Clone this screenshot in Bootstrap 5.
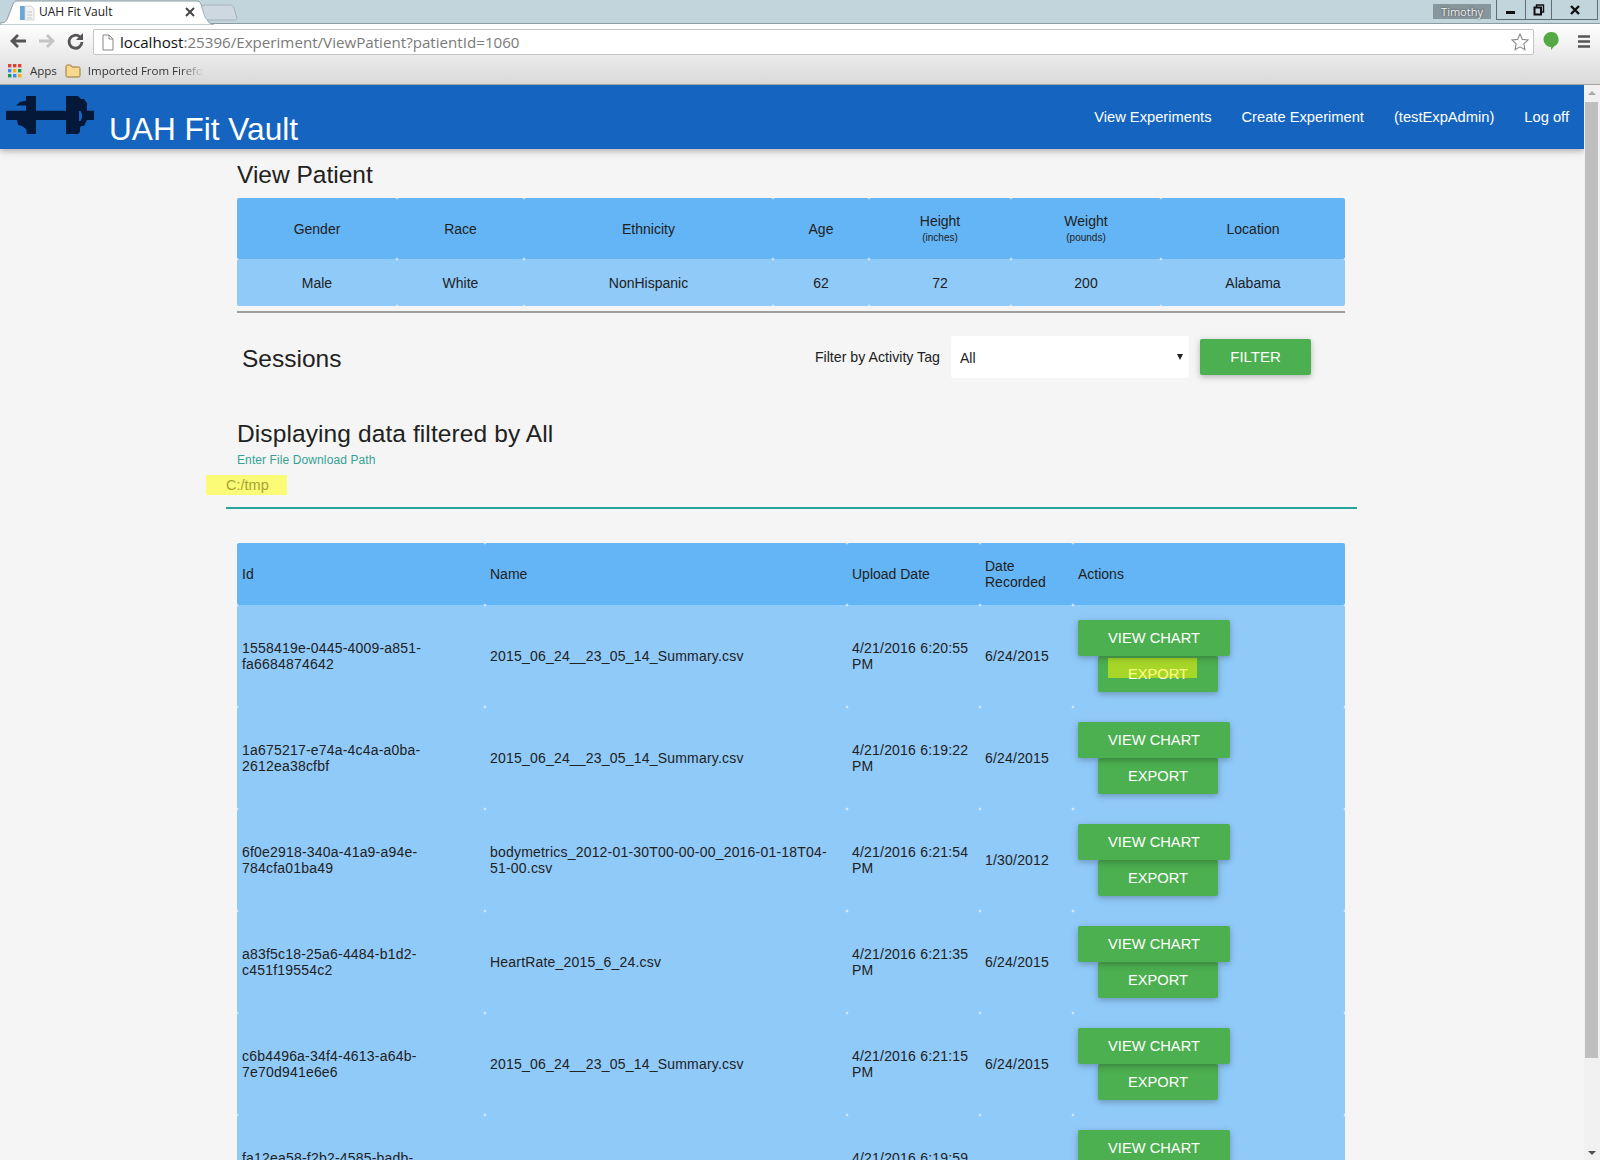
<!DOCTYPE html>
<html lang="en">
<head>
  <meta charset="UTF-8" />
  <title>UAH Fit Vault</title>
  <link href="https://cdn.jsdelivr.net/npm/bootstrap@5.3.0/dist/css/bootstrap.min.css" rel="stylesheet" />
  <style>
    html, body { height: 100%; overflow: hidden; }
    body { background: #f5f5f5; font-family: "Liberation Sans", Arial, sans-serif; font-size: 14px; color: #212121; }

    /* browser frame */
    .tab-strip { height: 24px; background: #c3d5dc; border-bottom: 1px solid #8c9ba1; position: relative; }
    .tab-shape { position: absolute; left: 0; top: 0; }
    .tab-title { position: absolute; left: 39px; top: 4px; font: 12px/16px "Open Sans", sans-serif; color: #222; }
    .tab-close { position: absolute; left: 184px; top: 6px; }
    .user-chip { width: 58px; height: 15px; margin-top: 4px; background: #87969c; color: #f2f2f2; font: 11px/15px "Open Sans", sans-serif; text-align: center; text-shadow: 0 0 2px #333; }
    .win-btns { height: 20px; margin: 0 2px 0 5px; border: 1px solid #5e6d74; border-top: 0; }
    .win-btn { height: 19px; border-left: 1px solid #5e6d74; }
    .win-btn:first-child { border-left: 0; width: 28px; }
    .win-btn.mid { width: 26px; }
    .win-btn.wide { width: 46px; }
    .browser-bars { background: linear-gradient(#ffffff, #d9d9d9); height: 61px; border-bottom: 1px solid #a3a3a3; }
    .tool-row { height: 34px; padding-top: 5px; }
    .addr-box { width: 1441px; height: 26px; margin-left: 5px; background: #fff; border: 1px solid #c4c4c4; border-radius: 2px; font: 15.15px/24px "Open Sans", sans-serif; color: #7a7a7a; padding-left: 7px; }
    .addr-host { color: #111; }
    .addr-text { margin-left: 5px; }
    .marks-row { height: 25px; font: 11.5px/16px "Open Sans", sans-serif; color: #333; padding-left: 8px; }
    .marks-fade { width: 116px; margin-left: 7px; white-space: nowrap; overflow: hidden; -webkit-mask-image: linear-gradient(to right, #000 80%, transparent); mask-image: linear-gradient(to right, #000 80%, transparent); }

    /* page */
    .page-body { height: 1075px; }
    .page-main { width: 1584px; overflow: hidden; }
    .fit-nav { height: 64px; background: #1565c0; box-shadow: 0 2px 5px rgba(0,0,0,.2), 0 2px 10px rgba(0,0,0,.12); align-items: flex-start; position: relative; }
    .fit-brand { display: flex; padding: 0; margin: 0; color: #fff; font-size: 31.6px; line-height: 36px; }
    .fit-brand:hover { color: #fff; }
    .fit-logo { margin: 3px -1px 0 0; width: 110px; height: 55px; flex: none; }
    .fit-brand-text { margin-top: 26px; }
    .fit-links { padding-top: 22px; }
    .navbar-expand .fit-links .nav-link { color: #fff; font-size: 14.7px; line-height: 20px; padding: 0 15px; }
    .fit-wrap { width: 1108px; margin-left: 237px; }
    .fit-title { font-size: 24.5px; line-height: 30px; margin: 0; font-weight: 400; }
    .fit-head { margin: 11px 0 8px; }
    .fit-table { margin: 0; table-layout: fixed; --bs-table-bg: #90caf9; --bs-table-color: #212121; border: 0; }
    .fit-table thead { --bs-table-bg: #64b5f6; }
    .fit-table > :not(caption) > * > * { border: 0; border-radius: 2px; vertical-align: middle; font-weight: 400; line-height: 16px; padding: 15px 5px; }
    .patient-table { text-align: center; }
    .patient-table thead th { height: 61px; padding: 0 5px; }
    .patient-table tbody td { height: 47px; padding: 0 5px; }
    .unit-note { display: block; font-size: 10px; line-height: 12px; margin-top: 3px; }
    .session-table thead th { height: 62px; padding: 0 5px; }
    .session-table tbody td { height: 102px; letter-spacing: .2px; }
    .rule-grey { height: 2px; background: #9e9e9e; margin-top: 5px; }
    .session-bar { margin-top: 23px; height: 42px; padding: 0 34px 0 5px; }
    .filter-label { margin: 2px 11px 0 0; font-size: 14.2px; }
    .activity-pick { width: 238px; height: 42px; margin-right: 11px; border: 0; border-radius: 2px; font-size: 14px; padding: 2px 9px 0; color: #212121; background-size: 12px 12px; background-position: right 3px center; background-image: url("data:image/svg+xml,%3Csvg xmlns='http://www.w3.org/2000/svg' viewBox='0 0 12 12'%3E%3Cpath d='M3 3h6L6 9z' fill='%23222'/%3E%3C/svg%3E"); }
    .btn-fit { display: block; height: 36px; padding: 0; background: #4caf50; border: 0; border-radius: 2px; color: #fff; font-size: 15px; line-height: 36px; box-shadow: 0 2px 5px rgba(0,0,0,.16), 0 2px 10px rgba(0,0,0,.12); position: relative; }
    .btn-fit:hover { background: #4caf50; color: #fff; }
    .btn-filter { width: 111px; }
    .session-table .btn-fit { font-size: 14.7px; letter-spacing: 0; }
    .btn-view { width: 152px; margin-left: 0; z-index: 1; }
    .btn-export { width: 120px; margin-left: 20px; }
    .hl-over { position: absolute; left: 10px; top: 2px; width: 89px; height: 20px; background: rgba(255,255,0,.5); }
    .filter-note { margin-top: 41px; letter-spacing: .1px; }
    .path-label { color: #35a195; font-size: 12px; line-height: 16px; margin-top: 3px; letter-spacing: .1px; }
    .path-field { width: 81px; height: 20px; margin: 7px 0 0 -31px; padding-left: 20px; background: #fbfb78; color: #a6a432; font-size: 14.5px; line-height: 20px; }
    .rule-teal { height: 2px; background: #26a69a; margin: 12px -12px 34px -11px; }

    /* fake scrollbar */
    .fake-scroll { width: 16px; background: #f1f1f1; position: relative; }
    .fake-thumb { position: absolute; left: 1px; right: 2px; top: 17px; height: 956px; background: #bfbfbf; }
    .fake-up { position: absolute; left: 4px; top: 6px; border: 4px solid transparent; border-top: 0; border-bottom: 4px solid #a8a8a8; }
    .fake-down { position: absolute; left: 4px; bottom: 5px; border: 4px solid transparent; border-bottom: 0; border-top: 4px solid #505050; }
  </style>
</head>
<body>
  <div class="tab-strip d-flex justify-content-end">
    <svg class="tab-shape" width="245" height="25" viewBox="0 0 245 25">
      <path d="M0 23c5 0 7-2 8-6L13 4c1-2 2-3 4-3h179c3 0 4 1 5 3l6 15c1 3 3 5 6 5v1H0z" fill="#fff" stroke="#8c9ba1"/>
      <path d="M206 5h24c2 0 3 1 4 3l3 10c0 1 0 2-2 2h-26c-2 0-3-1-4-3l-3-9c-1-2 1-3 4-3z" fill="#cdd8e1" stroke="#a4b2bb"/>
    </svg>
    <svg class="tab-shape" width="36" height="24" viewBox="0 0 36 24">
      <rect x="20" y="6" width="5" height="14" fill="#6aa6d8"/>
      <path d="M25 6h6l3 3v11h-9z" fill="#f2f2f2" stroke="#c9ced4" stroke-width=".8"/>
      <path d="M27 12h5M27 15h5M27 18h5" stroke="#c4c8cc"/>
    </svg>
    <span class="tab-title">UAH Fit Vault</span>
    <svg class="tab-close" width="12" height="12" viewBox="0 0 12 12"><path d="M2 2l8 8M10 2l-8 8" stroke="#444" stroke-width="2"/></svg>
    <div class="user-chip">Timothy</div>
    <div class="win-btns d-flex">
      <div class="win-btn d-flex align-items-center justify-content-center"><svg width="12" height="10" viewBox="0 0 12 10"><rect x="1" y="6" width="9" height="3" fill="#111"/></svg></div>
      <div class="win-btn mid d-flex align-items-center justify-content-center"><svg width="12" height="12" viewBox="0 0 12 12"><path d="M3.500 3V1h7v7H8.500" fill="none" stroke="#111" stroke-width="1.4"/><rect x="1.500" y="3.500" width="6.500" height="7" fill="none" stroke="#111" stroke-width="2"/></svg></div>
      <div class="win-btn wide d-flex align-items-center justify-content-center"><svg width="12" height="10" viewBox="0 0 12 10"><path d="M2 1l8 8M10 1l-8 8" stroke="#111" stroke-width="2.4"/></svg></div>
    </div>
  </div>

  <div class="browser-bars">
    <div class="tool-row d-flex">
      <svg class="ms-2" width="80" height="24" viewBox="0 0 80 24">
        <path d="M18 12H4M10 6l-6 6 6 6" fill="none" stroke="#555" stroke-width="2.800"/>
        <path d="M31 12h14M39 6l6 6-6 6" fill="none" stroke="#c4c4c4" stroke-width="2.800"/>
        <path d="M74 13a6.500 6.500 0 1 1-2-5" fill="none" stroke="#555" stroke-width="2.800"/>
        <path d="M75 4v7h-7z" fill="#555"/>
      </svg>
      <div class="addr-box d-flex align-items-center">
        <svg width="14" height="17" viewBox="0 0 14 17"><path d="M2 1h6l4 4v11H2z" fill="#fff" stroke="#888"/><path d="M8 1v4h4" fill="none" stroke="#888"/></svg>
        <span class="addr-text flex-grow-1"><span class="addr-host">localhost</span>:25396/Experiment/ViewPatient?patientId=1060</span>
        <svg class="me-1" width="18" height="18" viewBox="0 0 18 18"><path d="M9 1l2.400 5.400 5.600.6-4.200 3.900 1.200 5.800L9 13.800 4 16.700l1.200-5.800L1 7l5.600-.6z" fill="#fff" stroke="#8a8a8a" stroke-width="1.100"/></svg>
      </div>
      <svg class="ms-2" width="18" height="24" viewBox="0 0 18 24"><path d="M9 3a7.500 7.500 0 0 1 3 14.400L9 21v-3a7.500 7.500 0 0 1 0-15z" fill="#55a944"/></svg>
      <svg class="ms-3" width="16" height="24" viewBox="0 0 16 24"><path d="M2 7.500h12M2 12.500h12M2 17.500h12" stroke="#555" stroke-width="2.600"/></svg>
    </div>
    <div class="marks-row d-flex align-items-center">
      <svg width="14" height="14" viewBox="0 0 14 14">
        <g fill="#db4437"><rect width="3.400" height="3.400"/><rect x="5" width="3.400" height="3.400"/><rect x="10" width="3.400" height="3.400"/></g>
        <g fill="#4285f4"><rect y="5" width="3.400" height="3.400"/></g><g fill="#f4b400"><rect x="5" y="5" width="3.400" height="3.400"/><rect x="10" y="10" width="3.400" height="3.400"/></g>
        <g fill="#0f9d58"><rect x="10" y="5" width="3.400" height="3.400"/><rect y="10" width="3.400" height="3.400"/></g><rect x="5" y="10" width="3.400" height="3.400" fill="#4285f4"/>
      </svg>
      <span class="ms-2">Apps</span>
      <svg class="ms-2" width="16" height="14" viewBox="0 0 16 14"><path d="M1 2.500c0-1 .5-1.500 1.500-1.500h3l1.500 2h6.500c1 0 1.500.5 1.500 1.500v7c0 1-.5 1.500-1.500 1.500h-11c-1 0-1.500-.5-1.500-1.500z" fill="#f7d88f" stroke="#9a7431"/></svg>
      <span class="marks-fade">Imported From Firefox</span>
    </div>
  </div>

  <div class="page-body d-flex">
    <div class="page-main">
      <nav class="navbar navbar-expand fit-nav p-0">
        <a class="navbar-brand fit-brand" href="#">
          <svg class="fit-logo" viewBox="0 0 110 55">
            <path fill="#04193a" d="M6 22.700H26V17.500H16L20 14 26 12.500V8H36V22.700H66V8H78L81 11H84L87 15V22.700H94V32H87L84 38H81L80 40V44L78 46H66V32H36V46H27L26 41 22 38 18 37 17 32H6Z"/>
            <path fill="#1565c0" d="M79 23h1.500l1.500 3v4l-1.500 3H79z"/>
          </svg>
          <span class="fit-brand-text">UAH Fit Vault</span>
        </a>
        <ul class="navbar-nav ms-auto fit-links">
          <li class="nav-item"><a class="nav-link" href="#">View Experiments</a></li>
          <li class="nav-item"><a class="nav-link" href="#">Create Experiment</a></li>
          <li class="nav-item"><a class="nav-link" href="#">(testExpAdmin)</a></li>
          <li class="nav-item"><a class="nav-link" href="#">Log off</a></li>
        </ul>
      </nav>

      <div class="fit-wrap">
        <h2 class="fit-title fit-head">View Patient</h2>
        <table class="table fit-table patient-table">
          <colgroup><col width="160"><col width="127"><col width="249"><col width="96"><col width="142"><col width="150"><col width="184"></colgroup>
          <thead>
            <tr>
              <th>Gender</th><th>Race</th><th>Ethnicity</th><th>Age</th>
              <th>Height<span class="unit-note">(inches)</span></th>
              <th>Weight<span class="unit-note">(pounds)</span></th>
              <th>Location</th>
            </tr>
          </thead>
          <tbody>
            <tr><td>Male</td><td>White</td><td>NonHispanic</td><td>62</td><td>72</td><td>200</td><td>Alabama</td></tr>
          </tbody>
        </table>
        <div class="rule-grey"></div>

        <div class="session-bar d-flex align-items-center">
          <h2 class="fit-title pt-1">Sessions</h2>
          <label class="filter-label ms-auto" for="activityTag">Filter by Activity Tag</label>
          <select id="activityTag" class="form-select activity-pick"><option>All</option></select>
          <button class="btn btn-fit btn-filter">FILTER</button>
        </div>

        <h2 class="fit-title filter-note">Displaying data filtered by All</h2>
        <div class="path-label">Enter File Download Path</div>
        <div class="path-field">C:/tmp</div>
        <div class="rule-teal"></div>

        <table class="table fit-table session-table">
          <colgroup><col width="248"><col width="362"><col width="133"><col width="93"><col width="272"></colgroup>
          <thead>
            <tr><th>Id</th><th>Name</th><th>Upload Date</th><th>Date Recorded</th><th>Actions</th></tr>
          </thead>
          <tbody>
            <tr>
              <td>1558419e-0445-4009-a851-fa6684874642</td><td>2015_06_24__23_05_14_Summary.csv</td><td>4/21/2016 6:20:55 PM</td><td>6/24/2015</td>
              <td><button class="btn btn-fit btn-view">VIEW CHART</button><button class="btn btn-fit btn-export">EXPORT<span class="hl-over"></span></button></td>
            </tr>
            <tr>
              <td>1a675217-e74a-4c4a-a0ba-2612ea38cfbf</td><td>2015_06_24__23_05_14_Summary.csv</td><td>4/21/2016 6:19:22 PM</td><td>6/24/2015</td>
              <td><button class="btn btn-fit btn-view">VIEW CHART</button><button class="btn btn-fit btn-export">EXPORT</button></td>
            </tr>
            <tr>
              <td>6f0e2918-340a-41a9-a94e-784cfa01ba49</td><td>bodymetrics_2012-01-30T00-00-00_2016-01-18T04-51-00.csv</td><td>4/21/2016 6:21:54 PM</td><td>1/30/2012</td>
              <td><button class="btn btn-fit btn-view">VIEW CHART</button><button class="btn btn-fit btn-export">EXPORT</button></td>
            </tr>
            <tr>
              <td>a83f5c18-25a6-4484-b1d2-c451f19554c2</td><td>HeartRate_2015_6_24.csv</td><td>4/21/2016 6:21:35 PM</td><td>6/24/2015</td>
              <td><button class="btn btn-fit btn-view">VIEW CHART</button><button class="btn btn-fit btn-export">EXPORT</button></td>
            </tr>
            <tr>
              <td>c6b4496a-34f4-4613-a64b-7e70d941e6e6</td><td>2015_06_24__23_05_14_Summary.csv</td><td>4/21/2016 6:21:15 PM</td><td>6/24/2015</td>
              <td><button class="btn btn-fit btn-view">VIEW CHART</button><button class="btn btn-fit btn-export">EXPORT</button></td>
            </tr>
            <tr>
              <td>fa12ea58-f2b2-4585-badb-<br>&nbsp;</td><td></td><td>4/21/2016 6:19:59 PM</td><td></td>
              <td><button class="btn btn-fit btn-view">VIEW CHART</button><button class="btn btn-fit btn-export">EXPORT</button></td>
            </tr>
          </tbody>
        </table>
      </div>
    </div>
    <div class="fake-scroll">
      <span class="fake-up"></span>
      <div class="fake-thumb"></div>
      <span class="fake-down"></span>
    </div>
  </div>

  <script src="https://cdn.jsdelivr.net/npm/bootstrap@5.3.0/dist/js/bootstrap.bundle.min.js"></script>
</body>
</html>
